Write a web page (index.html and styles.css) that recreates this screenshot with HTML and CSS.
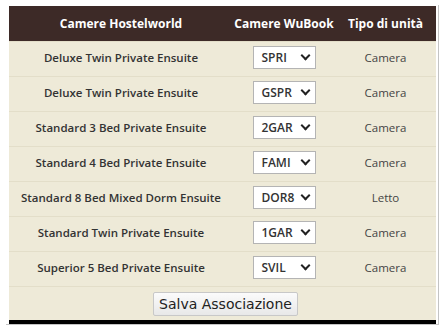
FILE: index.html
```html
<!DOCTYPE html>
<html>
<head>
<meta charset="utf-8" />
<title>Associazione camere</title>
<link rel="stylesheet" href="styles.css">
</head>
<body>
<div class="frame">
  <table class="rooms">
    <thead>
      <tr>
        <th class="c1">Camere Hostelworld</th>
        <th class="c2">Camere WuBook</th>
        <th class="c3">Tipo di unità</th>
      </tr>
    </thead>
    <tbody>
      <tr>
        <td class="name">Deluxe Twin Private Ensuite</td>
        <td><span class="sel">SPRI<i></i></span></td>
        <td class="kind">Camera</td>
      </tr>
      <tr>
        <td class="name">Deluxe Twin Private Ensuite</td>
        <td><span class="sel">GSPR<i></i></span></td>
        <td class="kind">Camera</td>
      </tr>
      <tr>
        <td class="name">Standard 3 Bed Private Ensuite</td>
        <td><span class="sel">2GAR<i></i></span></td>
        <td class="kind">Camera</td>
      </tr>
      <tr>
        <td class="name">Standard 4 Bed Private Ensuite</td>
        <td><span class="sel">FAMI<i></i></span></td>
        <td class="kind">Camera</td>
      </tr>
      <tr>
        <td class="name">Standard 8 Bed Mixed Dorm Ensuite</td>
        <td><span class="sel">DOR8<i></i></span></td>
        <td class="kind">Letto</td>
      </tr>
      <tr>
        <td class="name">Standard Twin Private Ensuite</td>
        <td><span class="sel">1GAR<i></i></span></td>
        <td class="kind">Camera</td>
      </tr>
      <tr>
        <td class="name">Superior 5 Bed Private Ensuite</td>
        <td><span class="sel">SVIL<i></i></span></td>
        <td class="kind">Camera</td>
      </tr>
      <tr class="actions">
        <td colspan="3"><button class="save">Salva Associazione</button></td>
      </tr>
    </tbody>
  </table>
  <div class="bar"></div>
</div>
</body>
</html>
```

FILE: styles.css
```css
*{ padding:0; margin:0; }
body{ background:#fff; font-family:"Open Sans", "Liberation Sans", sans-serif; }

.frame{
  margin:5px 0 0 6px;
  width:433px;
  padding:1px 1px 0 3px;
  border-right:1px solid #c4c4c4;
  border-bottom:1px solid #c4c4c4;
  box-sizing:border-box;
}

.rooms{ width:427px; border-collapse:collapse; table-layout:fixed; background:#eeead8; }
.rooms th{
  height:35px;
  background:#3d2a27;
  color:#fff;
  font-size:12px;
  font-weight:700;
  text-align:center;
  white-space:nowrap;
  padding:0;
}
.rooms .c1{ width:224px; }
.rooms .c2{ width:102px; }
.rooms td{
  height:31px;
  border-top:1px solid #e3dec9;
  text-align:center;
  vertical-align:middle;
  white-space:nowrap;
  padding:0 0 3px;
  line-height:14px;
  color:#333;
  font-size:11.5px;
}
.rooms td.name{ font-weight:600; }
.rooms td.kind{ color:#444; }

.sel{
  display:flex;
  align-items:center;
  justify-content:space-between;
  box-sizing:border-box;
  width:63px;
  height:23px;
  margin:0 auto;
  padding:0 6px 0 8px;
  background:#fff;
  border:1px solid #b4b4b4;
  font-size:12px;
  font-weight:600;
  color:#333;
}
.sel i{
  width:5px;
  height:5px;
  border-right:2px solid #222;
  border-bottom:2px solid #222;
  transform:rotate(45deg);
  margin-top:-4px;
}

.actions td{ height:33px; padding:0 0 0 6px; }
.save{
  display:block;
  margin:0 auto;
  width:145px;
  height:24px;
  font-family:"DejaVu Sans", sans-serif;
  font-size:14px;
  color:#222;
  background:linear-gradient(#fbfbfb, #e8e8e8);
  border:1px solid #c8c8c8;
  border-radius:2px;
}

.bar{ width:427px; height:4px; background:#000; }
```
